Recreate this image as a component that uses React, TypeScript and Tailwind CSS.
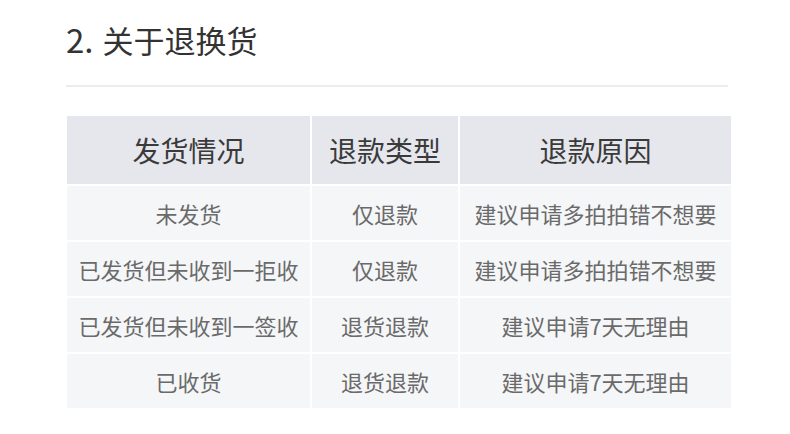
const rows = [
  ['未发货', '仅退款', '建议申请多拍拍错不想要'],
  ['已发货但未收到一拒收', '仅退款', '建议申请多拍拍错不想要'],
  ['已发货但未收到一签收', '退货退款', '建议申请7天无理由'],
  ['已收货', '退货退款', '建议申请7天无理由'],
];

const headers = ['发货情况', '退款类型', '退款原因'];

export default function App() {
  return (
    <div
      className="w-[790px] h-[434px] bg-white pl-[66px] pt-[19px]"
      style={{ fontFamily: '"Noto Sans CJK SC", "Noto Sans", sans-serif' }}
    >
      <h2 className="h-[40px] text-[31px] leading-[40px] text-[#333]">
        <span className="text-[33px]">2.</span>
        <span className="ml-[9px]">关于退换货</span>
      </h2>
      <div className="mt-[26px] h-[2px] w-[662px] bg-[#ececec]" />
      <div className="mt-[29px] ml-px grid w-[664px] grid-cols-[243px_146px_271px] gap-[2px] bg-white">
        {headers.map((h) => (
          <div
            key={h}
            className="flex h-[68px] items-center justify-center bg-[#e5e7ed] text-[28px] text-[#3a3a3a]"
          >
            {h}
          </div>
        ))}
        {rows.map((r, i) =>
          r.map((c, j) => (
            <div
              key={`${i}-${j}`}
              className="flex h-[54px] items-center justify-center bg-[#f5f6f8] text-[22px] text-[#6a6a6a]"
            >
              {c}
            </div>
          ))
        )}
      </div>
    </div>
  );
}
